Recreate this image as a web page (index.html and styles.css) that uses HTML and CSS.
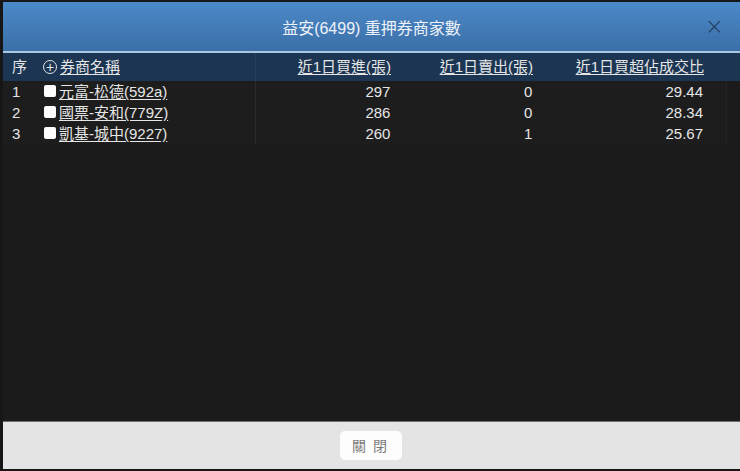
FILE: index.html
```html
<!DOCTYPE html>
<html lang="zh-Hant">
<head>
<meta charset="utf-8">
<title>益安(6499) 重押券商家數</title>
<link rel="stylesheet" href="styles.css">
</head>
<body>
<div class="modal">
  <div class="modal-header">
    <div class="modal-title">益安(6499) 重押券商家數</div>
    <div class="modal-close">×</div>
  </div>
  <div class="modal-body">
    <div class="table">
      <div class="row head">
        <div class="c-no">序</div>
        <div class="c-name"><span class="plus">+</span><span class="u">券商名稱</span></div>
        <div class="c-num c-buy"><span class="u">近1日買進(張)</span></div>
        <div class="c-num c-sell"><span class="u">近1日賣出(張)</span></div>
        <div class="c-num c-ratio"><span class="u">近1日買超佔成交比</span></div>
      </div>
      <div class="row">
        <div class="c-no">1</div>
        <div class="c-name"><span class="box"></span><span class="u">元富-松德(592a)</span></div>
        <div class="c-num c-buy">297</div>
        <div class="c-num c-sell">0</div>
        <div class="c-num c-ratio">29.44</div>
      </div>
      <div class="row">
        <div class="c-no">2</div>
        <div class="c-name"><span class="box"></span><span class="u">國票-安和(779Z)</span></div>
        <div class="c-num c-buy">286</div>
        <div class="c-num c-sell">0</div>
        <div class="c-num c-ratio">28.34</div>
      </div>
      <div class="row">
        <div class="c-no">3</div>
        <div class="c-name"><span class="box"></span><span class="u">凱基-城中(9227)</span></div>
        <div class="c-num c-buy">260</div>
        <div class="c-num c-sell">1</div>
        <div class="c-num c-ratio">25.67</div>
      </div>
    </div>
  </div>
  <div class="modal-footer">
    <div class="btn">關 閉</div>
  </div>
</div>
</body>
</html>
```
FILE: styles.css
```css
html, body {
  margin: 0;
  padding: 0;
  background: #161616;
  width: 740px;
  height: 471px;
  overflow: hidden;
  font-family: "Liberation Sans", "Noto Sans CJK TC", sans-serif;
}
.modal {
  margin: 2px 0 0 3px;
  width: 737px;
  height: 467px;
  display: flex;
  flex-direction: column;
  background: #1b1b1b;
}
.modal-header {
  height: 49px;
  background: linear-gradient(#4b89c8, #3c6fa7);
  border-bottom: 2px solid #a9c6e2;
  display: flex;
  align-items: center;
  justify-content: center;
  position: relative;
}
.modal-title {
  color: #eef3f9;
  font-size: 16px;
}
.modal-close {
  position: absolute;
  right: 16px;
  top: 12px;
  color: #1f3b5c;
  font-size: 23px;
  line-height: 24px;
  font-family: "DejaVu Sans", sans-serif;
  font-weight: 300;
}
.modal-body {
  flex: 1;
  background: #1b1b1b;
}
.table {
  width: 724px;
  color: #e6e6e6;
  font-size: 15px;
}
.row {
  display: flex;
  height: 21px;
  line-height: 21px;
  background: #1d1d1d;
}
.row.head {
  height: 28px;
  line-height: 28px;
  background: #1b3552;
  width: 737px;
}
.row.head .c-name {
  border-right-color: #2a3f57;
}
.c-no {
  width: 40px;
  padding-left: 9px;
  box-sizing: border-box;
}
.c-name {
  width: 212px;
  display: flex;
  align-items: center;
  border-right: 1px solid #2b2b2b;
}
.c-num {
  text-align: right;
  box-sizing: border-box;
}
.c-buy { width: 143px; padding-right: 8px; }
.c-sell { width: 142px; padding-right: 8px; }
.c-ratio { width: 172px; padding-right: 9px; }
.row:not(.head) .c-ratio { border-right: 1px solid #252525; width: 187px; padding-right: 23px; }
.u {
  text-decoration: underline;
  text-underline-offset: 2px;
}
.plus {
  display: inline-flex;
  width: 14px;
  height: 14px;
  border: 1.3px solid #e6e6e6;
  border-radius: 50%;
  align-items: center;
  justify-content: center;
  font-size: 14px;
  line-height: 13px;
  margin-right: 3px;
  box-sizing: border-box;
}
.box {
  display: inline-block;
  width: 12px;
  height: 12px;
  background: #fdfdfd;
  border-radius: 2px;
  margin: 0 3px 0 1px;
  position: relative;
  top: -1px;
}
.modal-footer {
  height: 47px;
  background: #e4e4e4;
  border-top: 1px solid #6e6e6e;
  display: flex;
  align-items: center;
  justify-content: center;
}
.btn {
  width: 62px;
  height: 29px;
  background: #fdfdfd;
  border-radius: 5px;
  color: #7a7a7a;
  font-size: 14px;
  line-height: 29px;
  text-align: center;
  letter-spacing: 2px;
  font-family: "Noto Sans CJK TC", sans-serif;
  margin-left: -2px;
}
```
